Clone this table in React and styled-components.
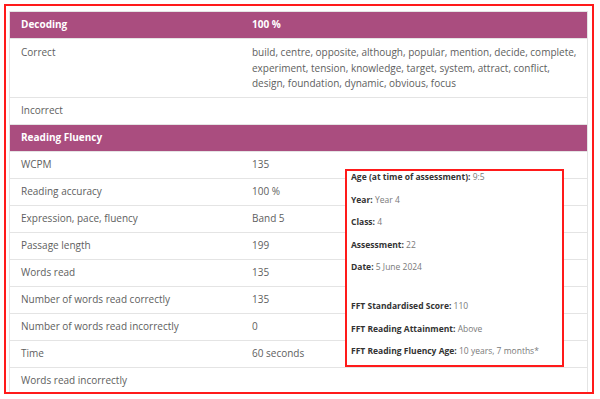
import React from 'react';
import styled, { createGlobalStyle } from 'styled-components';

const GlobalStyle = createGlobalStyle`
  html, body {
    margin: 0;
    padding: 0;
    background: #ffffff;
  }
  body {
    font-family: "Open Sans", "Noto Sans", sans-serif;
  }
`;

const Frame = styled.div`
  position: relative;
  box-sizing: border-box;
  margin: 4px 0 0 4px;
  width: 590px;
  height: 390px;
  border: 2px solid #ff1a1a;
  padding: 5px 4px 0 3px;
  overflow: hidden;
`;

const Table = styled.div`
  border: 1px solid #e4e4e4;
  border-bottom: none;
`;

const Row = styled.div`
  display: grid;
  grid-template-columns: 231px 1fr;
  box-sizing: border-box;
  min-height: 27px;
  border-bottom: 1px solid #e4e4e4;
  background: ${(p) => (p.$head ? '#aa4d7f' : '#ffffff')};
  color: ${(p) => (p.$head ? '#ffffff' : '#5e5e5e')};
  font-weight: ${(p) => (p.$head ? 700 : 400)};
  font-size: 10px;
`;

const Cell = styled.div`
  padding: ${(p) => (p.$multi ? '6px 10px 5px 11px' : '0 10px 0 11px')};
  display: flex;
  align-items: ${(p) => (p.$multi ? 'flex-start' : 'center')};
  line-height: 15.5px;
`;

const Popup = styled.div`
  position: absolute;
  left: 339px;
  top: 163px;
  width: 219px;
  height: 198px;
  box-sizing: border-box;
  border: 2px solid #ff1a1a;
  background: #ffffff;
  padding: 0 4px;
  display: flex;
  flex-direction: column;
  gap: 10.5px;
  font-size: 8.5px;
  line-height: 12px;
`;

const Line = styled.div`
  color: #7a7a7a;
  white-space: nowrap;
  margin-top: ${(p) => (p.$gapBefore ? '16.5px' : '0')};
`;

const Label = styled.span`
  color: #333333;
  font-weight: 700;
`;

const fluency = [
  ['WCPM', '135'],
  ['Reading accuracy', '100 %'],
  ['Expression, pace, fluency', 'Band 5'],
  ['Passage length', '199'],
  ['Words read', '135'],
  ['Number of words read correctly', '135'],
  ['Number of words read incorrectly', '0'],
  ['Time', '60 seconds'],
  ['Words read incorrectly', ''],
];

const details = [
  ['Age (at time of assessment):', '9:5'],
  ['Year:', 'Year 4'],
  ['Class:', '4'],
  ['Assessment:', '22'],
  ['Date:', '5 June 2024'],
  ['FFT Standardised Score:', '110', true],
  ['FFT Reading Attainment:', 'Above'],
  ['FFT Reading Fluency Age:', '10 years, 7 months*'],
];

const App = () => {
  return (
    <>
      <GlobalStyle />
      <Frame>
        <Table>
          <Row $head>
            <Cell>Decoding</Cell>
            <Cell>100 %</Cell>
          </Row>
          <Row>
            <Cell $multi>Correct</Cell>
            <Cell $multi>
              build, centre, opposite, although, popular, mention, decide, complete,
              experiment, tension, knowledge, target, system, attract, conflict,
              design, foundation, dynamic, obvious, focus
            </Cell>
          </Row>
          <Row>
            <Cell>Incorrect</Cell>
            <Cell></Cell>
          </Row>
          <Row $head>
            <Cell>Reading Fluency</Cell>
            <Cell></Cell>
          </Row>
          {fluency.map(([label, value], index) => (
            <Row key={index}>
              <Cell>{label}</Cell>
              <Cell>{value}</Cell>
            </Row>
          ))}
        </Table>
        <Popup>
          {details.map(([label, value, gap], index) => (
            <Line key={index} $gapBefore={gap}>
              <Label>{label}</Label> {value}
            </Line>
          ))}
        </Popup>
      </Frame>
    </>
  );
};

export default App;
